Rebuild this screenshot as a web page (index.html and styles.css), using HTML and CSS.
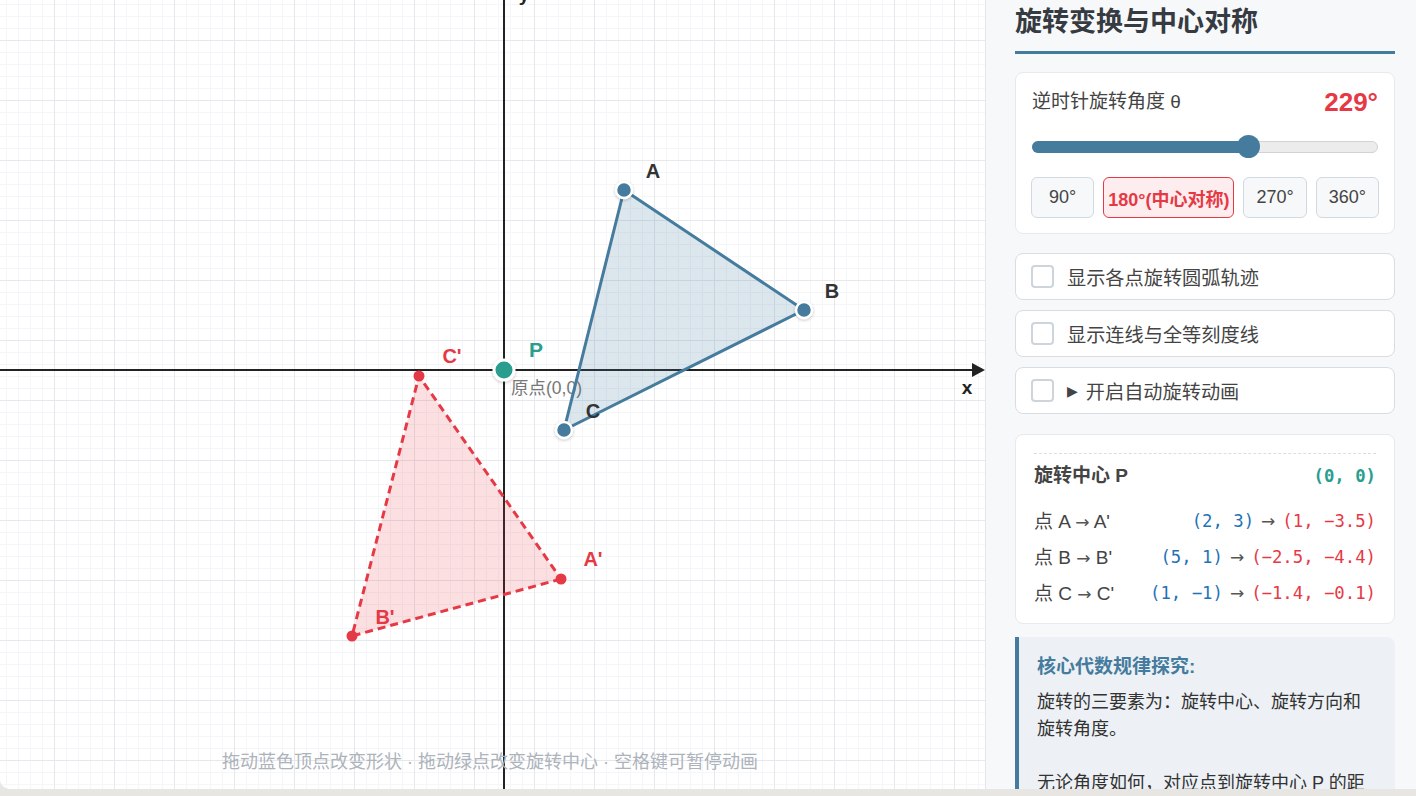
FILE: index.html
```html
<!DOCTYPE html>
<html lang="zh-CN">
<head>
  <meta charset="UTF-8">
  <meta name="viewport" content="width=device-width, initial-scale=1.0">
  <title>旋转变换与中心对称</title>
  <link rel="stylesheet" href="styles.css">
</head>
<body>
  <div class="app">
    <main class="stage">
      <svg class="board" viewBox="0 0 985 789" width="985" height="789">
        <defs>
          <pattern id="fine" x="6" y="4" width="12" height="12" patternUnits="userSpaceOnUse">
            <path d="M0.5 0V12M0 0.5H12" stroke="#f5f6f8" stroke-width="1"/>
          </pattern>
          <pattern id="grid" x="54" y="40" width="60" height="60" patternUnits="userSpaceOnUse">
            <path d="M0.5 0V60M0 0.5H60" stroke="#e6e8ec" stroke-width="1"/>
          </pattern>
          <filter id="soft" x="-60%" y="-60%" width="220%" height="220%">
            <feDropShadow dx="0" dy="1" stdDeviation="1.5" flood-color="#000" flood-opacity="0.25"/>
          </filter>
        </defs>

        <!-- grid -->
        <rect width="985" height="789" fill="#fff"/>
        <rect width="985" height="789" fill="url(#fine)"/>
        <rect width="985" height="789" fill="url(#grid)"/>

        <!-- axes -->
        <line x1="0" y1="370" x2="974" y2="370" stroke="#222" stroke-width="2"/>
        <polygon points="985,370 972,363 972,377" fill="#222"/>
        <line x1="504" y1="0" x2="504" y2="789" stroke="#222" stroke-width="2"/>
        <text class="axis-lbl" x="967" y="394">x</text>
        <text class="axis-lbl" x="524" y="1">y</text>
        <text class="origin-lbl" x="511" y="394">原点(0,0)</text>

        <!-- image triangle A'B'C' -->
        <polygon class="tri-img" points="561,579 352,636 419,376"/>
        <circle class="dot-img" cx="561" cy="579" r="5.5"/>
        <circle class="dot-img" cx="352" cy="636" r="5.5"/>
        <circle class="dot-img" cx="419" cy="376" r="5.5"/>

        <!-- source triangle ABC -->
        <polygon class="tri-src" points="624,190 804,310 564,430"/>
        <circle class="dot-src" cx="624" cy="190" r="8" filter="url(#soft)"/>
        <circle class="dot-src" cx="804" cy="310" r="8" filter="url(#soft)"/>
        <circle class="dot-src" cx="564" cy="430" r="8" filter="url(#soft)"/>

        <!-- center P -->
        <circle class="dot-p" cx="504" cy="370" r="10" filter="url(#soft)"/>

        <text class="lbl-src" x="653" y="171">A</text>
        <text class="lbl-src" x="832" y="291">B</text>
        <text class="lbl-src" x="593" y="411">C</text>
        <text class="lbl-img" x="593" y="559">A'</text>
        <text class="lbl-img" x="385" y="617">B'</text>
        <text class="lbl-img" x="452" y="356">C'</text>
        <text class="lbl-p" x="536" y="349">P</text>

        <text class="hint" x="490" y="762">拖动蓝色顶点改变形状 · 拖动绿点改变旋转中心 · 空格键可暂停动画</text>
      </svg>
    </main>

    <aside class="panel">
      <h1 class="title">旋转变换与中心对称</h1>

      <section class="card">
        <div class="angle-head">
          <span class="angle-lbl">逆时针旋转角度 θ</span>
          <span class="angle-val">229°</span>
        </div>
        <div class="slider">
          <div class="track"></div>
          <div class="fill" style="width: 63.6%"></div>
          <div class="thumb" style="left: calc(11.5px + (100% - 23px) * 0.636)"></div>
        </div>
        <div class="presets">
          <button class="preset">90°</button>
          <button class="preset on">180°(中心对称)</button>
          <button class="preset">270°</button>
          <button class="preset">360°</button>
        </div>
      </section>

      <label class="toggle first"><span class="box"></span>显示各点旋转圆弧轨迹</label>
      <label class="toggle"><span class="box"></span>显示连线与全等刻度线</label>
      <label class="toggle"><span class="box"></span><span class="play">▶</span>开启自动旋转动画</label>

      <section class="info">
        <div class="info-head">
          <span>旋转中心 P</span>
          <span class="mono teal">(0, 0)</span>
        </div>
        <div class="pt first">
          <span>点 A <span class="arr">→</span> A'</span>
          <span><span class="mono blue">(2, 3)</span><span class="arr gap">→</span><span class="mono red">(1, −3.5)</span></span>
        </div>
        <div class="pt">
          <span>点 B <span class="arr">→</span> B'</span>
          <span><span class="mono blue">(5, 1)</span><span class="arr gap">→</span><span class="mono red">(−2.5, −4.4)</span></span>
        </div>
        <div class="pt">
          <span>点 C <span class="arr">→</span> C'</span>
          <span><span class="mono blue">(1, −1)</span><span class="arr gap">→</span><span class="mono red">(−1.4, −0.1)</span></span>
        </div>
      </section>

      <section class="note">
        <h3>核心代数规律探究:</h3>
        <p>旋转的三要素为：旋转中心、旋转方向和旋转角度。<br><br>无论角度如何，对应点到旋转中心 P 的距离始终相等，对应点与旋转中心连线所成的角都等于旋转角。</p>
      </section>
    </aside>
  </div>
</body>
</html>
```

FILE: styles.css
```css
* {
  margin: 0;
  padding: 0;
  box-sizing: border-box;
}

body {
  background: #e8e6e2;
  font-family: "Liberation Sans", "Noto Sans CJK SC", sans-serif;
  color: #444;
}

.app {
  display: flex;
  height: 789px;
  overflow: hidden;
  border-radius: 0 0 0 10px;
  background: #fff;
}

/* drawing board */
.stage {
  flex: 1;
  overflow: hidden;
}

.board {
  display: block;
}

.axis-lbl {
  font: bold 19px "Liberation Sans", sans-serif;
  fill: #222;
  text-anchor: middle;
}

.origin-lbl {
  font: 17.5px "Liberation Sans", "Noto Sans CJK SC", sans-serif;
  fill: #777;
}

.tri-src {
  fill: rgba(69, 123, 157, 0.19);
  stroke: #457b9d;
  stroke-width: 3;
  stroke-linejoin: round;
}

.tri-img {
  fill: rgba(230, 57, 70, 0.16);
  stroke: #e63946;
  stroke-width: 3;
  stroke-dasharray: 8 5;
}

.dot-src {
  fill: #457b9d;
  stroke: #fff;
  stroke-width: 2.5;
}

.dot-img {
  fill: #e63946;
}

.dot-p {
  fill: #2a9d8f;
  stroke: #fff;
  stroke-width: 3;
}

.lbl-src,
.lbl-img,
.lbl-p {
  font: bold 20px "Liberation Sans", sans-serif;
  text-anchor: middle;
  dominant-baseline: central;
}

.lbl-src { fill: #333; }
.lbl-img { fill: #e63946; }
.lbl-p {
  fill: #2a9d8f;
  font-size: 21px;
}

.hint {
  font: 18px "Liberation Sans", "Noto Sans CJK SC", sans-serif;
  fill: #adb3bb;
  text-anchor: middle;
  dominant-baseline: central;
}

/* side panel */
.panel {
  width: 431px;
  flex: none;
  background: #f6f8fa;
  border-left: 1px solid #e3e7eb;
  padding: 0 21px 0 29px;
  overflow: hidden;
}

.title {
  font-size: 27px;
  font-weight: 700;
  color: #363b42;
  line-height: 36px;
  padding: 4px 0 11px;
  border-bottom: 3px solid #457b9d;
}

.card {
  margin-top: 18px;
  background: #fff;
  border: 1px solid #e6e9ed;
  border-radius: 8px;
  padding: 16px 15px 15px;
}

.angle-head {
  display: flex;
  justify-content: space-between;
  align-items: center;
  line-height: 26px;
  padding: 0 1px;
}

.angle-lbl {
  font-size: 19px;
  color: #444;
}

.angle-val {
  font-size: 26px;
  font-weight: 700;
  color: #e63946;
}

.slider {
  position: relative;
  height: 23px;
  margin: 20px 1px 0;
}

.track {
  position: absolute;
  left: 0;
  right: 0;
  top: 6px;
  height: 12px;
  border-radius: 6px;
  background: #ececec;
  border: 1px solid #cfd3d8;
}

.fill {
  position: absolute;
  left: 0;
  top: 6px;
  height: 12px;
  border-radius: 6px;
  background: #457b9d;
}

.thumb {
  position: absolute;
  top: 0;
  width: 23px;
  height: 23px;
  margin-left: -11.5px;
  border-radius: 50%;
  background: #457b9d;
}

.presets {
  display: flex;
  gap: 9px;
  margin-top: 19px;
}

.preset {
  flex: 1;
  height: 41px;
  padding: 0 4px;
  border: 1px solid #d3d9e0;
  border-radius: 6px;
  background: #f6f8fa;
  font-family: inherit;
  font-size: 18px;
  color: #444;
  white-space: nowrap;
}

.preset.on {
  border-color: #e63946;
  background: #fdedee;
  color: #e63946;
  font-weight: 700;
}

.toggle {
  display: flex;
  align-items: center;
  gap: 13px;
  height: 47px;
  margin-top: 10px;
  padding: 0 15px;
  background: #fff;
  border: 1px solid #d8dde3;
  border-radius: 8px;
  font-size: 19.2px;
  color: #444;
}

.toggle.first {
  margin-top: 19px;
}

.box {
  width: 23px;
  height: 23px;
  border: 2px solid #cdd4dc;
  border-radius: 4px;
  background: #fff;
  flex: none;
}

.play {
  font: 14px "DejaVu Sans", sans-serif;
  color: #444;
  margin-right: -5px;
}

.info {
  margin-top: 20px;
  background: #fff;
  border: 1px solid #e6e9ed;
  border-radius: 8px;
  padding: 18px 18px 12px;
}

.info-head {
  display: flex;
  justify-content: space-between;
  align-items: center;
  border-top: 1px dashed #dadee3;
  padding-top: 10px;
  line-height: 24px;
  font-size: 19px;
  font-weight: 700;
  color: #444;
}

.pt {
  display: flex;
  justify-content: space-between;
  align-items: center;
  height: 36px;
  font-size: 19px;
  line-height: 1;
  color: #444;
}

.pt.first {
  margin-top: 15px;
}

.mono {
  font-family: "DejaVu Sans Mono", monospace;
  font-size: 17.3px;
}

.teal {
  color: #2a9d8f;
  font-weight: 700;
}

.blue { color: #1f72b8; }
.red { color: #e63946; }

.arr {
  font-family: "DejaVu Sans", sans-serif;
  font-size: 17px;
  color: #555;
}

.arr.gap {
  margin: 0 7px;
}

.note {
  margin-top: 13px;
  background: #edf1f5;
  border-left: 4px solid #457b9d;
  border-radius: 0 8px 8px 0;
  padding: 18px 18px 18px;
}

.note h3 {
  font-size: 19px;
  font-weight: 700;
  line-height: 24px;
  color: #457b9d;
  margin-bottom: 10px;
}

.note p {
  font-size: 18px;
  line-height: 27px;
  color: #333;
}
```
